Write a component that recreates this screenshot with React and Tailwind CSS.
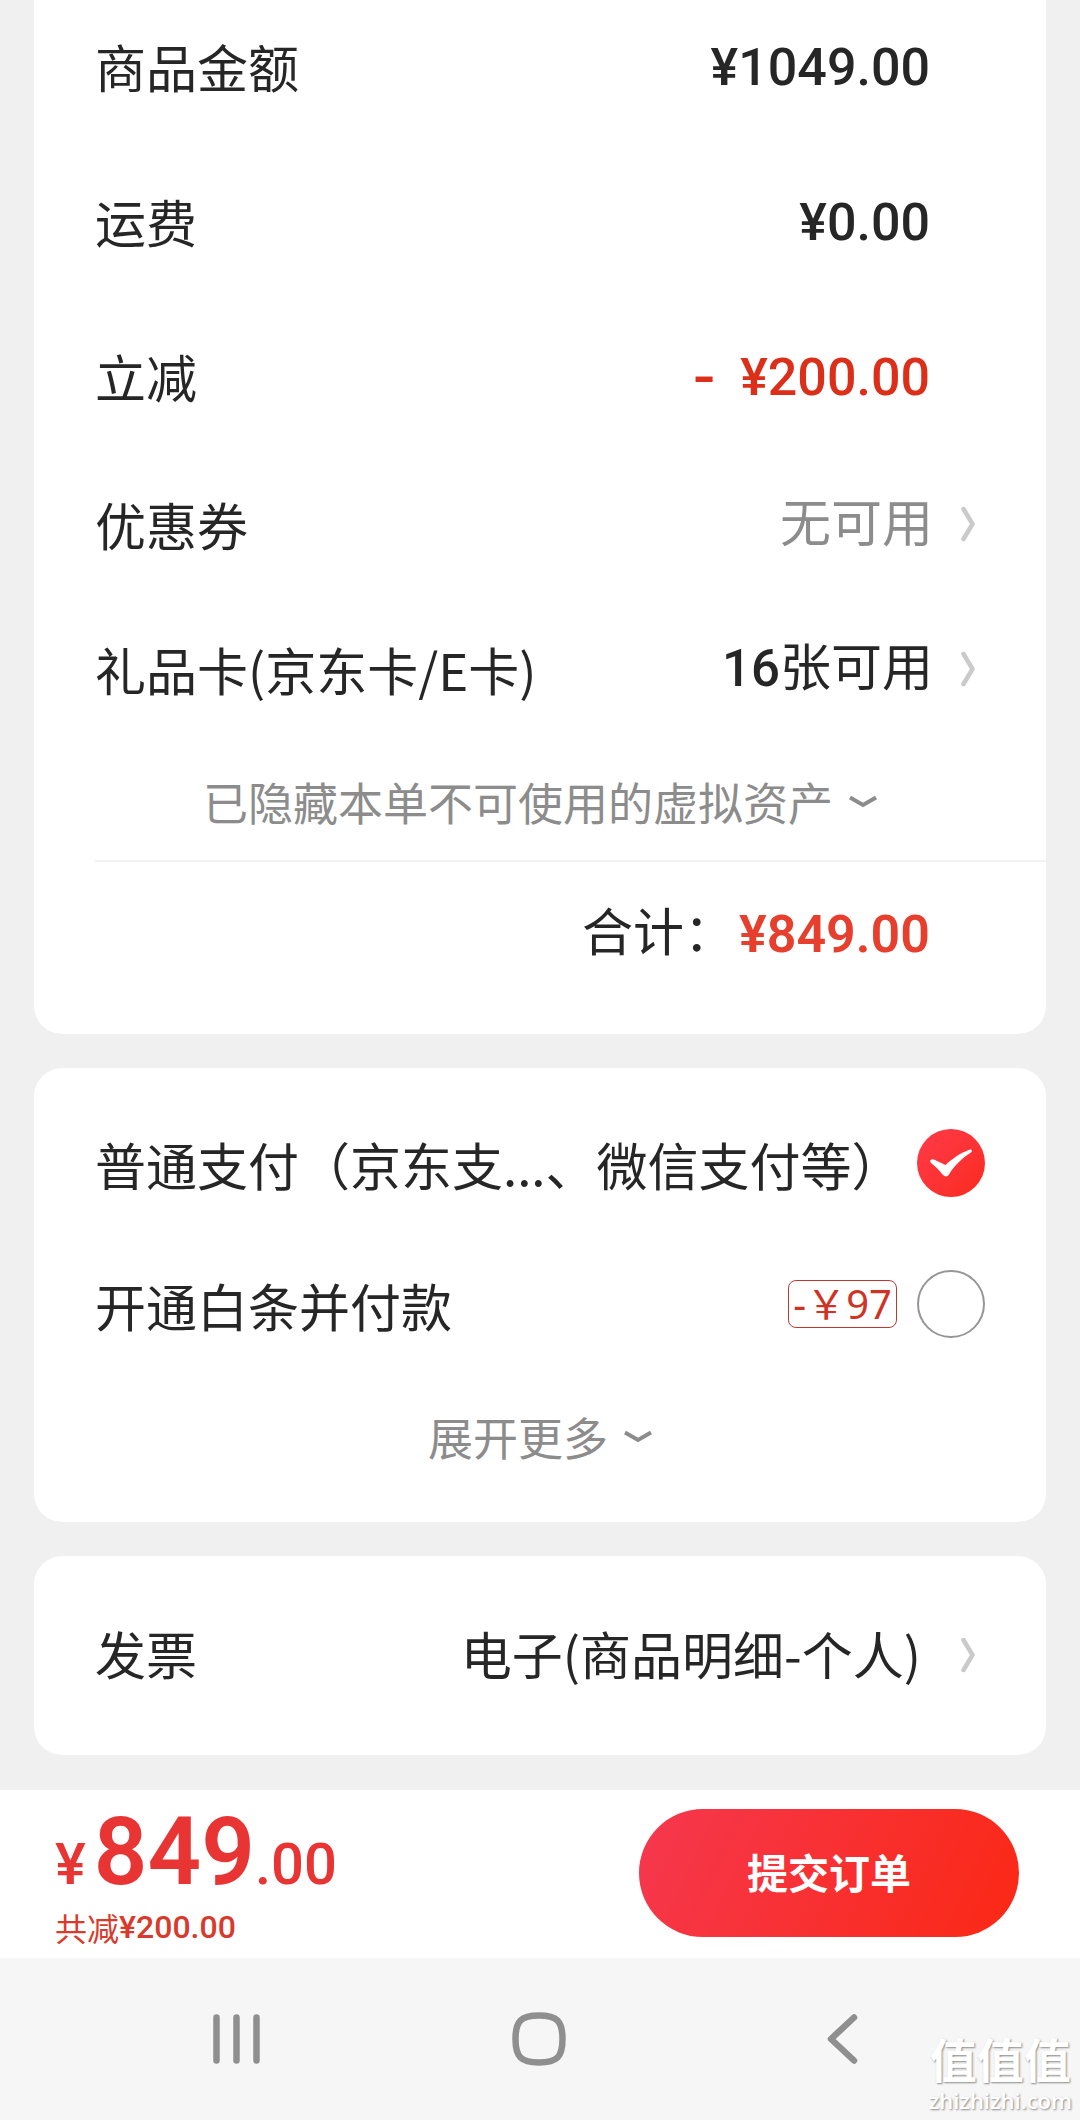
import { useState } from 'react'

const amounts = [
  { label: '商品金额', value: '¥1049.00' },
  { label: '运费', value: '¥0.00' },
  { label: '立减', value: '¥200.00', discount: true },
]

const payments = [
  { id: 'normal', label: '普通支付（京东支...、微信支付等）' },
  { id: 'baitiao', label: '开通白条并付款', badge: '-￥97' },
]

function ChevronRight() {
  return (
    <svg viewBox="0 0 14 36" className="h-9 w-3.5 shrink-0" fill="none" stroke="#cacaca" strokeWidth="4.500" strokeLinecap="round" strokeLinejoin="round">
      <path d="M2.500 3 11.500 18 2.500 33" />
    </svg>
  )
}

function ChevronDown() {
  return (
    <svg viewBox="0 0 28 14" className="h-3.5 w-7 shrink-0" fill="none" stroke="#8c8c8c" strokeWidth="4">
      <path d="M1 2.500 14 10 27 2.500" />
    </svg>
  )
}

function LinkRow({ label, children }) {
  return (
    <button type="button" className="flex w-full items-center justify-between pr-[71px] text-left">
      <span>{label}</span>
      <span className="flex items-center gap-7">
        <span className="pb-2 leading-[58px]">{children}</span>
        <ChevronRight />
      </span>
    </button>
  )
}

function MoreButton({ children }) {
  return (
    <button type="button" className="flex w-full items-center justify-center gap-4 pr-[61px] text-[45px] leading-[60px] text-[#8c8c8c]">
      {children}
      <ChevronDown />
    </button>
  )
}

function PaymentOption({ option, checked, onChange }) {
  return (
    <div className="flex items-center justify-between pr-[61px]">
      <label htmlFor={option.id} className="pt-0.5">{option.label}</label>
      <div className="flex items-center gap-5">
        {option.badge ? (
          <span className="rounded-lg border border-[#c0392f] px-1 font-['Noto_Sans','Noto_Sans_CJK_SC',sans-serif] text-[40px] leading-[46px] text-[#cf3325]">
            {option.badge}
          </span>
        ) : null}
        <span className="relative size-[68px] shrink-0">
          <input
            id={option.id}
            type="radio"
            name="payment"
            checked={checked}
            onChange={onChange}
            className="block size-full appearance-none rounded-full border-2 border-[#969696] checked:border-0 checked:bg-linear-to-br checked:from-[#ff3a47] checked:to-[#fb2a1c]"
          />
          {checked ? (
            <svg viewBox="0 0 68 68" className="pointer-events-none absolute inset-0 size-full" fill="#fff">
              <path d="M13 32C14 30 16 29.500 18 31L28.500 36C35 30 43 24 53 20.500C55 20 55.500 22 54 23.500C45 29 37 37 32 45.500C30.500 48 28 48 26 46C22 41 18 37 14 34Z" />
            </svg>
          ) : null}
        </span>
      </div>
    </div>
  )
}

export default function App() {
  const [payment, setPayment] = useState('normal')

  return (
    <div className="flex min-h-screen flex-col bg-[#f0f0f0] font-['Noto_Sans_CJK_SC',sans-serif] text-[51px] leading-[66px] text-[#262626]">
      <main className="flex flex-col gap-[34px] px-[34px] pb-[35px]">
        <section className="rounded-b-[28px] bg-white pt-[33px] pb-[72px] pl-[61px]">
          <dl className="flex flex-col gap-[85px] pr-[116px]">
            {amounts.map((item) => (
              <div key={item.label} className="flex items-start justify-between">
                <dt>{item.label}</dt>
                <dd className={`font-[Roboto,sans-serif] text-[52px] leading-[70px] font-medium ${item.discount ? 'text-[#dc2f1a]' : ''}`}>
                  {item.discount ? <span className="mr-6 font-[Inter,sans-serif] leading-none font-semibold">-</span> : null}
                  {item.value}
                </dd>
              </div>
            ))}
          </dl>
          <div className="mt-[78px] mb-[70px] flex flex-col gap-[78px]">
            <LinkRow label="优惠券">
              <span className="text-[#8c8c8c]">无可用</span>
            </LinkRow>
            <LinkRow label="礼品卡(京东卡/E卡)">
              <span className="font-[Roboto,sans-serif] leading-none font-medium">16</span>张可用
            </LinkRow>
          </div>
          <MoreButton>已隐藏本单不可使用的虚拟资产</MoreButton>
          <hr className="mt-7 border-t-2 border-[#f2f2f2]" />
          <p className="mt-[34px] flex items-end justify-end pr-[116px]">
            合计：
            <strong className="ml-1 font-[Roboto,sans-serif] text-[52px] leading-[54px] font-semibold text-[#e63f2e]">¥849.00</strong>
          </p>
        </section>

        <section className="rounded-[28px] bg-white pt-[61px] pb-[55px] pl-[61px]">
          <div className="mb-[69px] flex flex-col gap-[73px]">
            {payments.map((option) => (
              <PaymentOption
                key={option.id}
                option={option}
                checked={payment === option.id}
                onChange={() => setPayment(option.id)}
              />
            ))}
          </div>
          <MoreButton>展开更多</MoreButton>
        </section>

        <section className="rounded-[28px] bg-white pt-16 pb-[65px] pl-[61px]">
          <button type="button" className="flex w-full items-center justify-between pr-[71px] text-left">
            <span className="pb-1">发票</span>
            <span className="flex items-center gap-10">
              <span className="pb-1">电子(商品明细-个人)</span>
              <ChevronRight />
            </span>
          </button>
        </section>
      </main>

      <footer className="flex items-start justify-between bg-white pt-[19px] pr-[61px] pb-[9px] pl-[55px]">
        <div className="text-[#e93434]">
          <p className="flex items-baseline font-[Roboto,sans-serif] text-[58px] leading-[60px] font-medium">
            <span className="mr-2">¥</span>
            <span className="text-[94px] leading-[86px] font-semibold">849</span>
            <span>.00</span>
          </p>
          <p className="mt-2.5 flex text-[32px] leading-[44px] text-[#d83a2c]">
            共减<span className="font-[Roboto,sans-serif] font-medium">¥200.00</span>
          </p>
        </div>
        <button type="button" className="h-32 w-[380px] rounded-full bg-linear-[115deg] from-[#f5384f] to-[#fb2814] pb-1 text-[41px] font-bold text-white">
          提交订单
        </button>
      </footer>

      <nav className="relative flex h-[162px] items-center justify-between bg-[#f6f6f6] pr-[210px] pl-[208px]">
        <button type="button" aria-label="最近任务">
          <svg viewBox="0 0 56 56" className="size-14" stroke="#8f8f8f" strokeWidth="6.500" strokeLinecap="round">
            <path d="M8.500 6.500V49.500M28.500 6.500V49.500M48.500 6.500V49.500" />
          </svg>
        </button>
        <button type="button" aria-label="主屏幕">
          <svg viewBox="0 0 56 56" className="size-14" fill="none" stroke="#8f8f8f" strokeWidth="6.500">
            <path d="M28 4.500C46 4.500 51.500 10 51.500 28S46 51.500 28 51.500 4.500 46 4.500 28 10 4.500 28 4.500Z" />
          </svg>
        </button>
        <button type="button" aria-label="返回">
          <svg viewBox="0 0 56 56" className="size-14" fill="none" stroke="#8f8f8f" strokeWidth="6.500" strokeLinecap="round" strokeLinejoin="round">
            <path d="M40 6.500 17 28 40 49.500" />
          </svg>
        </button>
        <div className="absolute right-2 bottom-2 flex flex-col items-center text-white [text-shadow:1px_1px_2px_#8a8a8a]">
          <span className="text-[47px] leading-[60px] font-bold">值值值</span>
          <span className="font-['Open_Sans',sans-serif] text-[22px] leading-[24px] font-semibold">zhizhizhi.com</span>
        </div>
      </nav>
    </div>
  )
}
